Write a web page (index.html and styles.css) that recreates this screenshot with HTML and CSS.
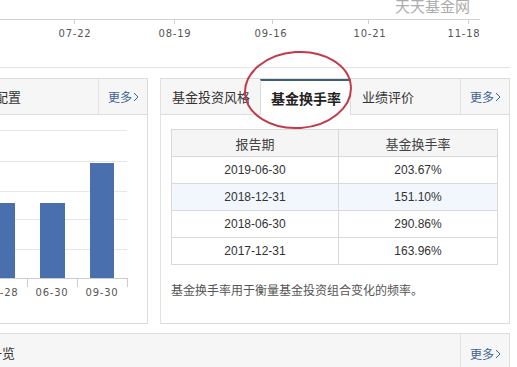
FILE: index.html
```html
<!DOCTYPE html>
<html lang="zh">
<head>
<meta charset="utf-8">
<link rel="stylesheet" href="styles.css">
</head>
<body>
<div class="page">
  <div class="top">
    <svg class="axis" width="510" height="67" viewBox="0 0 510 67">
      <text x="395" y="12" class="mark">天天基金网</text>
      <line x1="0" y1="19.5" x2="480" y2="19.5" stroke="#cfcfcf"/>
      <g stroke="#cfcfcf">
        <line x1="74.5" y1="19" x2="74.5" y2="24"/>
        <line x1="174.5" y1="19" x2="174.5" y2="24"/>
        <line x1="272.5" y1="19" x2="272.5" y2="24"/>
        <line x1="368.5" y1="19" x2="368.5" y2="24"/>
        <line x1="468.5" y1="19" x2="468.5" y2="24"/>
      </g>
      <g class="lbl">
        <text x="75" y="37">07-22</text>
        <text x="175" y="37">08-19</text>
        <text x="271" y="37">09-16</text>
        <text x="370" y="37">10-21</text>
        <text x="464" y="37">11-18</text>
      </g>
    </svg>
  </div>

  <div class="panels">
    <div class="panel left">
      <div class="phead">
        <div class="ptitle">资产配置</div>
        <div class="spacer"></div>
        <a class="more">更多<svg width="6" height="10" viewBox="0 0 6 10"><path d="M1 1l4 4-4 4" fill="none" stroke="#3b6394" stroke-width="1"/></svg></a>
      </div>
      <div class="pbody chartbody">
        <svg width="190" height="208" viewBox="0 0 190 208">
          <g transform="translate(42,0)">
            <g stroke="#e6e6e6">
              <line x1="-42" y1="15.5" x2="127" y2="15.5"/>
              <line x1="-42" y1="46.5" x2="127" y2="46.5"/>
              <line x1="-42" y1="76.5" x2="127" y2="76.5"/>
              <line x1="-42" y1="104.5" x2="127" y2="104.5"/>
              <line x1="-42" y1="134.5" x2="127" y2="134.5"/>
            </g>
            <g fill="#4a6fae">
              <rect x="-10" y="88" width="25" height="75"/>
              <rect x="40" y="88" width="25" height="75"/>
              <rect x="90" y="48" width="24" height="115"/>
            </g>
            <line x1="-42" y1="163.5" x2="127" y2="163.5" stroke="#cccccc"/>
            <g stroke="#cccccc">
              <line x1="27.5" y1="163" x2="27.5" y2="172"/>
              <line x1="77.5" y1="163" x2="77.5" y2="172"/>
              <line x1="127.5" y1="163" x2="127.5" y2="172"/>
            </g>
            <g class="lbl">
              <text x="2" y="181">03-28</text>
              <text x="52" y="181">06-30</text>
              <text x="102" y="181">09-30</text>
            </g>
          </g>
        </svg>
      </div>
    </div>

    <div class="panel right">
      <div class="phead">
        <div class="tab">基金投资风格</div>
        <div class="tab active">基金换手率</div>
        <div class="tab">业绩评价</div>
        <div class="spacer"></div>
        <a class="more">更多<svg width="6" height="10" viewBox="0 0 6 10"><path d="M1 1l4 4-4 4" fill="none" stroke="#3b6394" stroke-width="1"/></svg></a>
      </div>
      <div class="pbody tablebody">
        <table class="rate">
          <thead>
            <tr><th>报告期</th><th>基金换手率</th></tr>
          </thead>
          <tbody>
            <tr><td>2019-06-30</td><td>203.67%</td></tr>
            <tr class="hl"><td>2018-12-31</td><td>151.10%</td></tr>
            <tr><td>2018-06-30</td><td>290.86%</td></tr>
            <tr><td>2017-12-31</td><td>163.96%</td></tr>
          </tbody>
        </table>
        <p class="note">基金换手率用于衡量基金投资组合变化的频率。</p>
      </div>
    </div>
  </div>

  <div class="bottom">
    <div class="phead">
      <div class="ptitle btitle">变动一览</div>
      <div class="spacer"></div>
      <a class="more">更多<svg width="6" height="10" viewBox="0 0 6 10"><path d="M1 1l4 4-4 4" fill="none" stroke="#3b6394" stroke-width="1"/></svg></a>
    </div>
  </div>
</div>

<svg class="circle" width="130" height="100" viewBox="0 0 130 100">
  <ellipse cx="65" cy="50" rx="53" ry="38" fill="none" stroke="#c23b4a" stroke-width="2" transform="rotate(-4 65 50)"/>
</svg>
</body>
</html>
```

FILE: styles.css
```css
html, body {
  margin: 0;
  padding: 0;
  background: #ffffff;
}
body {
  width: 517px;
  height: 367px;
  overflow: hidden;
  position: relative;
  font-family: "Liberation Sans", "Noto Sans CJK SC", sans-serif;
  color: #333;
}
.page {
  margin-left: -43px;
  width: 553px;
}
.top {
  padding-left: 43px;
  border-bottom: 1px solid #e3e3e3;
  box-sizing: border-box;
  height: 68px;
}
.axis {
  display: block;
}
.axis .mark {
  font-family: "Noto Sans CJK SC", sans-serif;
  font-size: 15px;
  fill: #acacac;
}
.lbl text {
  font-family: "DejaVu Sans", "Liberation Sans", sans-serif;
  font-size: 10px;
  fill: #555;
  text-anchor: middle;
  letter-spacing: 0.8px;
}
.panels {
  display: flex;
  gap: 12px;
  margin-top: 10px;
}
.panel {
  border: 1px solid #dcdcdc;
  height: 246px;
  box-sizing: border-box;
  display: flex;
  flex-direction: column;
}
.left {
  width: 191px;
}
.right {
  width: 350px;
  border-left: 1px solid #e2e2e2;
}
.phead {
  height: 36px;
  background: #f6f6f6;
  border-bottom: 1px solid #dcdcdc;
  display: flex;
  align-items: stretch;
  box-sizing: border-box;
  flex: none;
}
.ptitle {
  padding-left: 11px;
  font-size: 13px;
  line-height: 35px;
  font-family: "Noto Sans CJK SC", sans-serif;
  color: #333;
}
.spacer {
  flex: 1;
}
.more {
  width: 49px;
  border-left: 1px solid #e2e2e2;
  font-family: "Noto Sans CJK SC", sans-serif;
  font-size: 12px;
  color: #3b6394;
  display: flex;
  align-items: center;
  padding-left: 9px;
  box-sizing: border-box;
  gap: 1px;
}
.tab {
  font-family: "Noto Sans CJK SC", sans-serif;
  font-size: 13px;
  line-height: 35px;
  padding: 0 10px 0 11px;
  color: #333;
}
.tab.active {
  background: #fff;
  border-top: 2px solid #3d5d78;
  border-left: 1px solid #dcdcdc;
  border-right: 1px solid #dcdcdc;
  margin-bottom: -1px;
  font-size: 14px;
  font-weight: bold;
  line-height: 34px;
  padding: 0 9px 0 10px;
  color: #222;
}
.pbody {
  flex: 1;
}
.chartbody svg {
  display: block;
}
.tablebody {
  padding: 14px 11px 0 10px;
}
.rate {
  width: 100%;
  border-collapse: collapse;
  font-size: 12px;
}
.rate th, .rate td {
  border: 1px solid #d9d9d9;
  height: 26px;
  padding: 0;
  text-align: center;
  color: #333;
}
.rate th {
  background: #f5f5f5;
  font-weight: normal;
  font-family: "Noto Sans CJK SC", sans-serif;
  font-size: 13px;
  color: #444;
}
.rate th:first-child, .rate td:first-child {
  width: 166px;
}
.rate tr.hl td {
  background: #f1f7fd;
}
.note {
  margin: 18px 0 0 0;
  font-family: "Noto Sans CJK SC", sans-serif;
  font-size: 12px;
  line-height: 14px;
  color: #555;
}
.bottom {
  margin-top: 9px;
  width: 553px;
}
.bottom .phead {
  border-top: 1px solid #dcdcdc;
  border-right: 1px solid #dcdcdc;
  border-bottom: none;
  height: 40px;
}
.btitle {
  padding-left: 6px;
  line-height: 38px;
}
.circle {
  position: absolute;
  left: 233px;
  top: 40px;
}
```
